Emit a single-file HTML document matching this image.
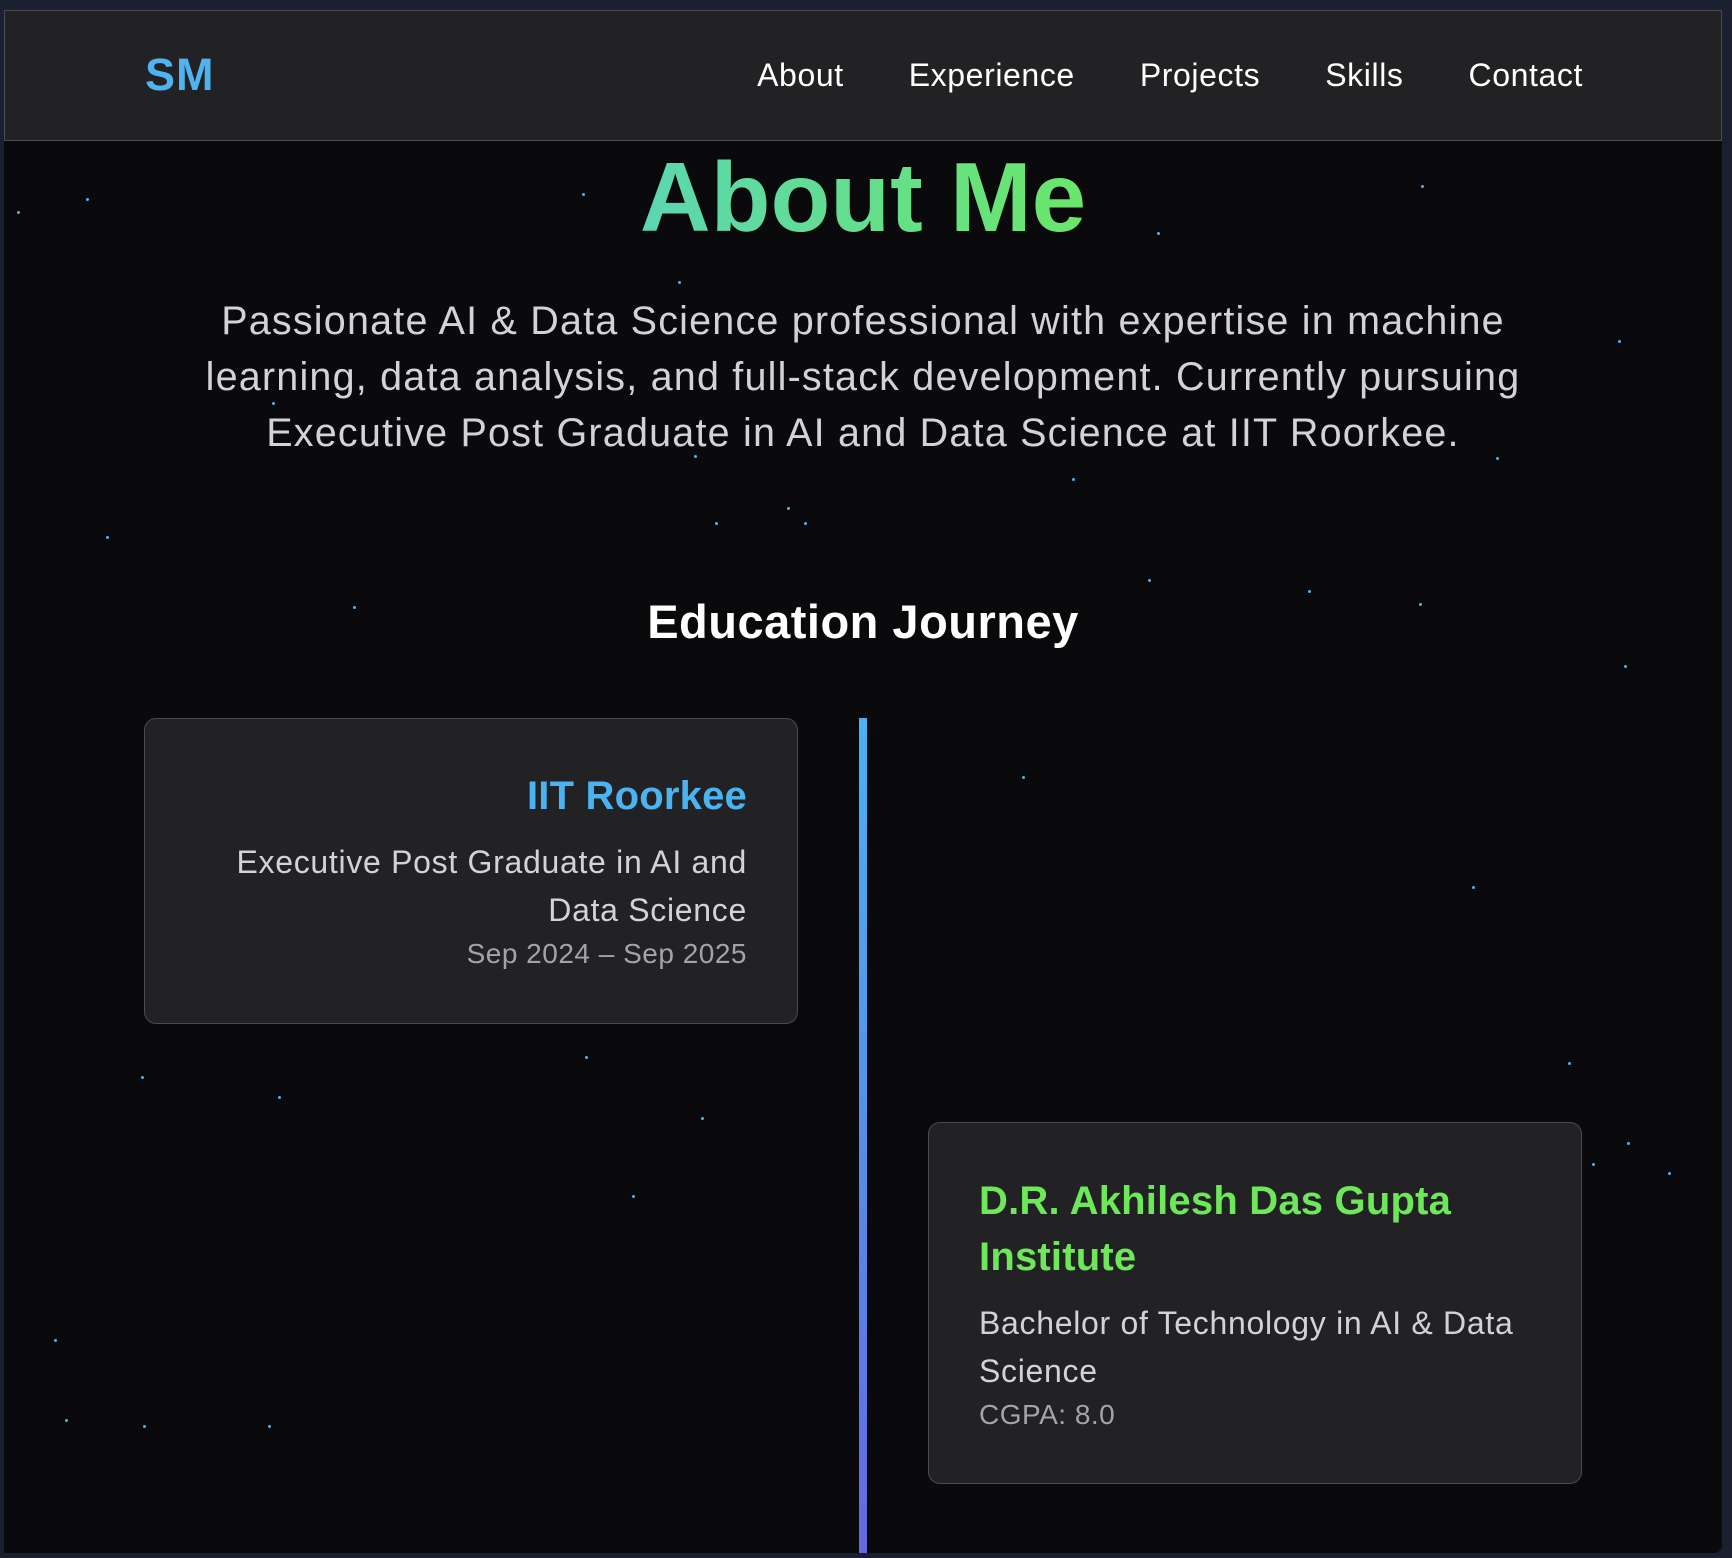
<!DOCTYPE html>
<html><head><meta charset="utf-8"><style>
*{margin:0;padding:0;box-sizing:border-box}
html,body{width:1732px;height:1558px;overflow:hidden;background:#1b2030;font-family:"Liberation Sans",sans-serif}
.page{position:absolute;left:4px;top:10px;width:1718px;height:1543px;background:#0a0a0d;border-bottom-right-radius:8px;overflow:hidden}
.nav{position:absolute;left:0;top:0;width:1718px;height:131px;background:#222224;border:1.5px solid #4a4a50}
.logo{position:absolute;left:140px;top:38px;font-size:45px;font-weight:bold;color:#4fb3f0;letter-spacing:1px}
.links{position:absolute;right:138px;top:46px;display:flex;gap:65px;font-size:32px;color:#fff;letter-spacing:0.6px}
.h1{position:absolute;left:0;width:1718px;top:131px;text-align:center;font-size:98px;font-weight:bold}
.h1 span{background:linear-gradient(90deg,#5cd6b0,#6be66a);-webkit-background-clip:text;background-clip:text;color:transparent}
.p{position:absolute;left:0;width:1718px;top:283px;text-align:center;font-size:39.5px;line-height:56px;color:#d2d3d8;letter-spacing:1.2px}
.h2{position:absolute;left:0;width:1718px;top:584px;text-align:center;font-size:47px;font-weight:bold;color:#fff;letter-spacing:0.5px}
.line{position:absolute;left:855px;top:708px;width:8px;height:845px;background:linear-gradient(#4ab2f2,#6468e0)}
.card{position:absolute;background:#222224;border:1.5px solid #4a4a50;border-radius:12px;padding:0 50px}
.t{font-size:40px;font-weight:bold;line-height:56px;letter-spacing:0.2px}
.d{font-size:32px;line-height:48px;color:#d2d3d8;letter-spacing:0.7px}
.s{font-size:28px;line-height:40px;color:#a2a3ab;letter-spacing:0.5px}
.dot{position:absolute;width:3px;height:3px;border-radius:50%;background:#4fb3f0}
</style></head><body><div class="page">
<div class="nav"><div class="logo">SM</div>
<div class="links"><span>About</span><span>Experience</span><span>Projects</span><span>Skills</span><span>Contact</span></div></div>
<div class="h1"><span>About Me</span></div>
<div class="p">Passionate AI &amp; Data Science professional with expertise in machine<br>learning, data analysis, and full-stack development. Currently pursuing<br>Executive Post Graduate in AI and Data Science at IIT Roorkee.</div>
<div class="h2">Education Journey</div>
<div class="line"></div>
<div class="card" style="left:140px;top:708px;width:654px;height:306px;text-align:right;padding-top:49px">
<div class="t" style="color:#4ab3f0">IIT Roorkee</div>
<div class="d" style="margin-top:14px">Executive Post Graduate in AI and<br>Data Science</div>
<div class="s">Sep 2024 – Sep 2025</div></div>
<div class="card" style="left:924px;top:1112px;width:654px;height:362px;padding-top:50px">
<div class="t" style="color:#6ee85a">D.R. Akhilesh Das Gupta<br>Institute</div>
<div class="d" style="margin-top:14px">Bachelor of Technology in AI &amp; Data<br>Science</div>
<div class="s">CGPA: 8.0</div></div>
<div class="dot" style="left:13px;top:201px"></div><div class="dot" style="left:82px;top:188px"></div><div class="dot" style="left:578px;top:183px"></div>
<div class="dot" style="left:1153px;top:222px"></div><div class="dot" style="left:1417px;top:175px"></div><div class="dot" style="left:674px;top:271px"></div>
<div class="dot" style="left:1614px;top:330px"></div><div class="dot" style="left:268px;top:392px"></div><div class="dot" style="left:690px;top:445px"></div>
<div class="dot" style="left:1492px;top:447px"></div><div class="dot" style="left:1068px;top:468px"></div><div class="dot" style="left:711px;top:512px"></div>
<div class="dot" style="left:783px;top:497px"></div><div class="dot" style="left:800px;top:512px"></div><div class="dot" style="left:102px;top:526px"></div>
<div class="dot" style="left:1144px;top:569px"></div><div class="dot" style="left:1304px;top:580px"></div><div class="dot" style="left:1415px;top:593px"></div>
<div class="dot" style="left:349px;top:596px"></div><div class="dot" style="left:1620px;top:655px"></div><div class="dot" style="left:1018px;top:766px"></div>
<div class="dot" style="left:1468px;top:876px"></div><div class="dot" style="left:1564px;top:1052px"></div><div class="dot" style="left:137px;top:1066px"></div>
<div class="dot" style="left:274px;top:1086px"></div><div class="dot" style="left:581px;top:1046px"></div><div class="dot" style="left:697px;top:1107px"></div>
<div class="dot" style="left:1623px;top:1132px"></div><div class="dot" style="left:1588px;top:1153px"></div><div class="dot" style="left:1664px;top:1162px"></div>
<div class="dot" style="left:628px;top:1185px"></div><div class="dot" style="left:50px;top:1329px"></div><div class="dot" style="left:61px;top:1409px"></div>
<div class="dot" style="left:139px;top:1415px"></div><div class="dot" style="left:264px;top:1415px"></div>
</div></body></html>
